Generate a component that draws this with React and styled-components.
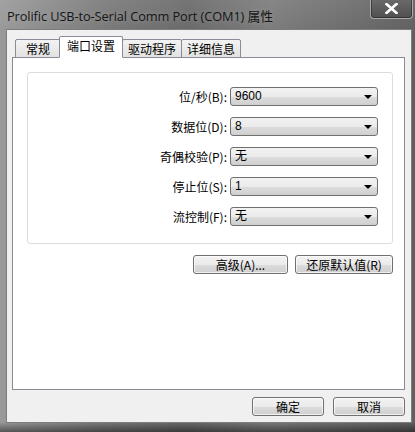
import React from 'react'
import styled, { createGlobalStyle } from 'styled-components'

const GlobalStyle = createGlobalStyle`
  html, body {
    margin: 0;
    padding: 0;
    background: #3b3b3b;
  }
  body {
    font-family: "Noto Sans CJK SC", "Liberation Sans", sans-serif;
  }
`

const rows = [
  { label: '位/秒(B):', value: '9600' },
  { label: '数据位(D):', value: '8' },
  { label: '奇偶校验(P):', value: '无' },
  { label: '停止位(S):', value: '1' },
  { label: '流控制(F):', value: '无' },
]

const tabs = ['常规', '端口设置', '驱动程序', '详细信息']

export default function App() {
  return (
    <>
      <GlobalStyle />
      <Frame>
        <TitleBar>
          <Title>Prolific USB-to-Serial Comm Port (COM1) 属性</Title>
          <CloseButton>
            <svg width='13' height='11' viewBox='0 0 13 11'>
              <path d='M1.5 1 L11.5 10 M11.5 1 L1.5 10' stroke='#fff' strokeWidth='2.6' strokeLinecap='square' />
            </svg>
          </CloseButton>
        </TitleBar>
        <Client>
          <TabStrip>
            {tabs.map((t, i) => (
              <Tab key={t} $active={i === 1}>{t}</Tab>
            ))}
          </TabStrip>
          <Panel>
            <GroupBox>
              <Form>
                {rows.map((r) => (
                  <React.Fragment key={r.label}>
                    <Label>{r.label}</Label>
                    <Combo>
                      <ComboText>{r.value}</ComboText>
                      <Arrow />
                    </Combo>
                  </React.Fragment>
                ))}
              </Form>
            </GroupBox>
            <ButtonRow>
              <Button $w={95}>高级(A)...</Button>
              <Button $w={98}>还原默认值(R)</Button>
            </ButtonRow>
          </Panel>
          <FooterRow>
            <Button $w={72}>确定</Button>
            <Button $w={72}>取消</Button>
          </FooterRow>
        </Client>
      </Frame>
    </>
  )
}

const Frame = styled.div`
  width: 415px;
  height: 432px;
  box-sizing: border-box;
  padding: 0 3px 9px 6px;
  display: flex;
  flex-direction: column;
  background:
    linear-gradient(to bottom, rgba(255,255,255,0.08), rgba(0,0,0,0) 30px),
    linear-gradient(to top, rgba(0,0,0,0.45), rgba(0,0,0,0) 10px),
    linear-gradient(to right, #9a9a9a 0%, #7a7a7a 25%, #6a6a6a 45%, #7c7c7c 65%, #606060 100%);
  overflow: hidden;
`

const TitleBar = styled.div`
  height: 29px;
  display: flex;
  align-items: flex-start;
  justify-content: space-between;
`

const Title = styled.div`
  font-family: "Open Sans", "Noto Sans CJK SC", sans-serif;
  font-size: 12.8px;
  color: #151515;
  margin-top: 6px;
  margin-left: 1px;
  letter-spacing: -0.1px;
  text-shadow: 0 0 6px rgba(255,255,255,0.25);
`

const CloseButton = styled.div`
  width: 43px;
  height: 20px;
  margin-top: -1px;
  margin-right: -1px;
  box-sizing: border-box;
  border: 1px solid #a9a9a9;
  border-top: none;
  border-radius: 0 0 4px 4px;
  background: linear-gradient(to bottom, #6a6a6a, #505050);
  box-shadow: inset 0 0 0 1px rgba(0,0,0,0.35);
  display: flex;
  align-items: center;
  justify-content: center;
`

const Client = styled.div`
  flex: 1;
  background: #f0f0f0;
  border: 1px solid #7d7d7d;
  box-sizing: border-box;
  display: flex;
  flex-direction: column;
  padding: 0 6px 0 5px;
`

const TabStrip = styled.div`
  height: 28px;
  display: flex;
  align-items: flex-end;
  padding-left: 3px;
  position: relative;
  z-index: 1;
  margin-bottom: -1px;
`

const Tab = styled.div`
  box-sizing: border-box;
  height: ${(p) => (p.$active ? '22px' : '19px')};
  padding: 0 ${(p) => (p.$active ? '7px' : '5px')};
  margin-left: ${(p) => (p.$active ? '-1px' : '0')};
  margin-right: -1px;
  border: 1px solid #898c95;
  border-bottom: ${(p) => (p.$active ? '1px solid #fff' : '1px solid #898c95')};
  background: ${(p) => (p.$active ? '#fff' : 'linear-gradient(to bottom, #f3f3f3, #e2e2e2)')};
  border-radius: 2px 2px 0 0;
  font-size: 12px;
  line-height: 17px;
  color: #000;
  position: relative;
  z-index: ${(p) => (p.$active ? 2 : 1)};
  min-width: 46px;
  text-align: center;
`

const Panel = styled.div`
  height: 333px;
  box-sizing: border-box;
  background: #fff;
  border: 1px solid #898c95;
  padding: 14px 11px 0 14px;
  display: flex;
  flex-direction: column;
`

const GroupBox = styled.div`
  height: 172px;
  box-sizing: border-box;
  border: 1px solid #dcdcdc;
  border-radius: 3px;
  padding: 14px 14px 0 0;
`

const Form = styled.div`
  display: grid;
  grid-template-columns: 1fr 148px;
  grid-auto-rows: 19px;
  row-gap: 11px;
  column-gap: 3px;
  align-items: center;
`

const Label = styled.div`
  text-align: right;
  font-size: 12px;
  color: #000;
  white-space: nowrap;
`

const Combo = styled.div`
  height: 19px;
  box-sizing: border-box;
  border: 1px solid #707070;
  border-radius: 3px;
  background: linear-gradient(to bottom, #f2f2f2 0%, #ebebeb 50%, #dddddd 51%, #cfcfcf 100%);
  display: flex;
  align-items: center;
  justify-content: space-between;
  padding: 0 5px 0 4px;
`

const ComboText = styled.span`
  font-family: "Liberation Sans", "Noto Sans CJK SC", sans-serif;
  font-size: 12px;
  color: #000;
  line-height: 17px;
`

const Arrow = styled.span`
  width: 0;
  height: 0;
  border-left: 4px solid transparent;
  border-right: 4px solid transparent;
  border-top: 4px solid #000;
  margin-top: 1px;
`

const ButtonRow = styled.div`
  display: flex;
  justify-content: flex-end;
  gap: 7px;
  margin-top: 11px;
`

const Button = styled.div`
  width: ${(p) => p.$w}px;
  height: 19px;
  box-sizing: border-box;
  border: 1px solid #707070;
  border-radius: 3px;
  background: linear-gradient(to bottom, #f2f2f2 0%, #ebebeb 50%, #dddddd 51%, #cfcfcf 100%);
  box-shadow: inset 0 0 0 1px rgba(255,255,255,0.7);
  font-size: 12px;
  line-height: 17px;
  text-align: center;
  color: #000;
  white-space: nowrap;
`

const FooterRow = styled.div`
  display: flex;
  justify-content: flex-end;
  gap: 9px;
  margin-top: 7px;
`
